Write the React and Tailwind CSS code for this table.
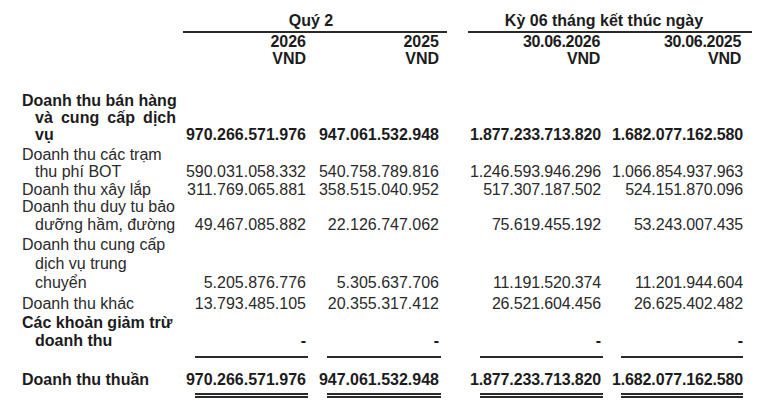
import React from "react";

const rows = [
  {
    bold: true,
    lines: ["Doanh thu bán hàng", "và cung cấp dịch", "vụ"],
    justify: [true, true, false],
    lh: "leading-[17px]",
    mt: "mt-0",
    v: ["970.266.571.976", "947.061.532.948", "1.877.233.713.820", "1.682.077.162.580"],
  },
  {
    lines: ["Doanh thu các trạm", "thu phí BOT"],
    lh: "leading-[17.5px]",
    mt: "mt-[3px]",
    v: ["590.031.058.332", "540.758.789.816", "1.246.593.946.296", "1.066.854.937.963"],
  },
  {
    lines: ["Doanh thu xây lắp"],
    lh: "leading-[17.5px]",
    mt: "mt-0",
    v: ["311.769.065.881", "358.515.040.952", "517.307.187.502", "524.151.870.096"],
  },
  {
    lines: ["Doanh thu duy tu bảo", "dưỡng hầm, đường"],
    lh: "leading-[17.5px]",
    mt: "mt-0",
    v: ["49.467.085.882", "22.126.747.062", "75.619.455.192", "53.243.007.435"],
  },
  {
    lines: ["Doanh thu cung cấp", "dịch vụ trung", "chuyển"],
    lh: "leading-[19px]",
    mt: "mt-[2px]",
    v: ["5.205.876.776", "5.305.637.706", "11.191.520.374", "11.201.944.604"],
  },
  {
    lines: ["Doanh thu khác"],
    lh: "leading-[17.5px]",
    mt: "mt-[3px]",
    v: ["13.793.485.105", "20.355.317.412", "26.521.604.456", "26.625.402.482"],
  },
  {
    bold: true,
    lines: ["Các khoản giảm trừ", "doanh thu"],
    lh: "leading-[18px]",
    mt: "mt-[1px]",
    v: ["-", "-", "-", "-"],
  },
];

const grid = "grid grid-cols-[156px_132px_133px_162px_140px]";
const sizes = [
  "text-[16px] pr-[2px]",
  "text-[16px] pr-[2px]",
  "text-[16px] tracking-[-0.15px] pr-[2px]",
  "text-[16px] tracking-[-0.15px] pr-0",
];
const lineMl = ["ml-[19px]", "ml-[19px]", "ml-[39px]", "ml-[18px]"];

function Row({ r }) {
  const weight = r.bold ? "font-bold text-[#1c1c1c]" : "font-normal text-[#2a2a2a]";
  return (
    <div className={`${grid} items-end ${r.lh} ${r.mt} ${weight}`}>
      <div className="text-[16px] pl-[2px]">
        {r.lines.map((l, i) => (
          <div
            key={i}
            className={`${i > 0 ? "pl-[13px]" : ""} ${
              r.justify && r.justify[i] ? "text-justify [text-align-last:justify]" : ""
            } whitespace-nowrap`}
          >
            {l}
          </div>
        ))}
      </div>
      {r.v.map((v, i) => (
        <div key={i} className={`${sizes[i]} text-right`}>
          {v}
        </div>
      ))}
    </div>
  );
}

export default function App() {
  return (
    <div
      className="w-[766px] h-[407px] bg-white overflow-hidden pl-5 pt-3"
      style={{ fontFamily: '"Liberation Sans", Arial, sans-serif' }}
    >
      {/* header group titles */}
      <div className={`${grid} leading-[17.5px] font-bold text-[#1c1c1c]`}>
        <div />
        <div className="col-span-2 ml-[7px] mr-[-6px] border-b-2 border-[#2a2a2a] text-center text-[16px] pr-[8px] pb-[1px]">
          Quý 2
        </div>
        <div className="col-span-2 ml-[27px] mr-[-9px] border-b-2 border-[#2a2a2a] text-center text-[16px] pr-[12px] pb-[1px]">
          Kỳ 06 tháng kết thúc ngày
        </div>
      </div>
      <div className={`${grid} leading-[17.5px] font-bold text-[#1c1c1c]`}>
        <div />
        <div className="text-right text-[16px] pr-[2px]">2026<br />VND</div>
        <div className="text-right text-[16px] pr-[2px]">2025<br />VND</div>
        <div className="text-right text-[16px] tracking-[-0.3px] pr-[3px]">30.06.2026<br />VND</div>
        <div className="text-right text-[16px] tracking-[-0.3px] pr-[2px]">30.06.2025<br />VND</div>
      </div>

      <div className="mt-[24px] flex flex-col">
        {rows.map((r, i) => (
          <Row key={i} r={r} />
        ))}
      </div>

      {/* single rule */}
      <div className={`${grid} mt-[6px]`}>
        <div />
        {lineMl.map((m, i) => (
          <div key={i} className={`${m} h-[2px] bg-[#2a2a2a]`} />
        ))}
      </div>

      <div className="mt-[13px]">
        <Row
          r={{
            bold: true,
            lh: "leading-[17.5px]",
            mt: "mt-0",
            lines: ["Doanh thu thuần"],
            v: ["970.266.571.976", "947.061.532.948", "1.877.233.713.820", "1.682.077.162.580"],
          }}
        />
      </div>

      {/* double rule */}
      <div className={`${grid} mt-[5px]`}>
        <div />
        {lineMl.map((m, i) => (
          <div key={i} className={`${m} h-[5px] border-y-2 border-[#2a2a2a]`} />
        ))}
      </div>
    </div>
  );
}
